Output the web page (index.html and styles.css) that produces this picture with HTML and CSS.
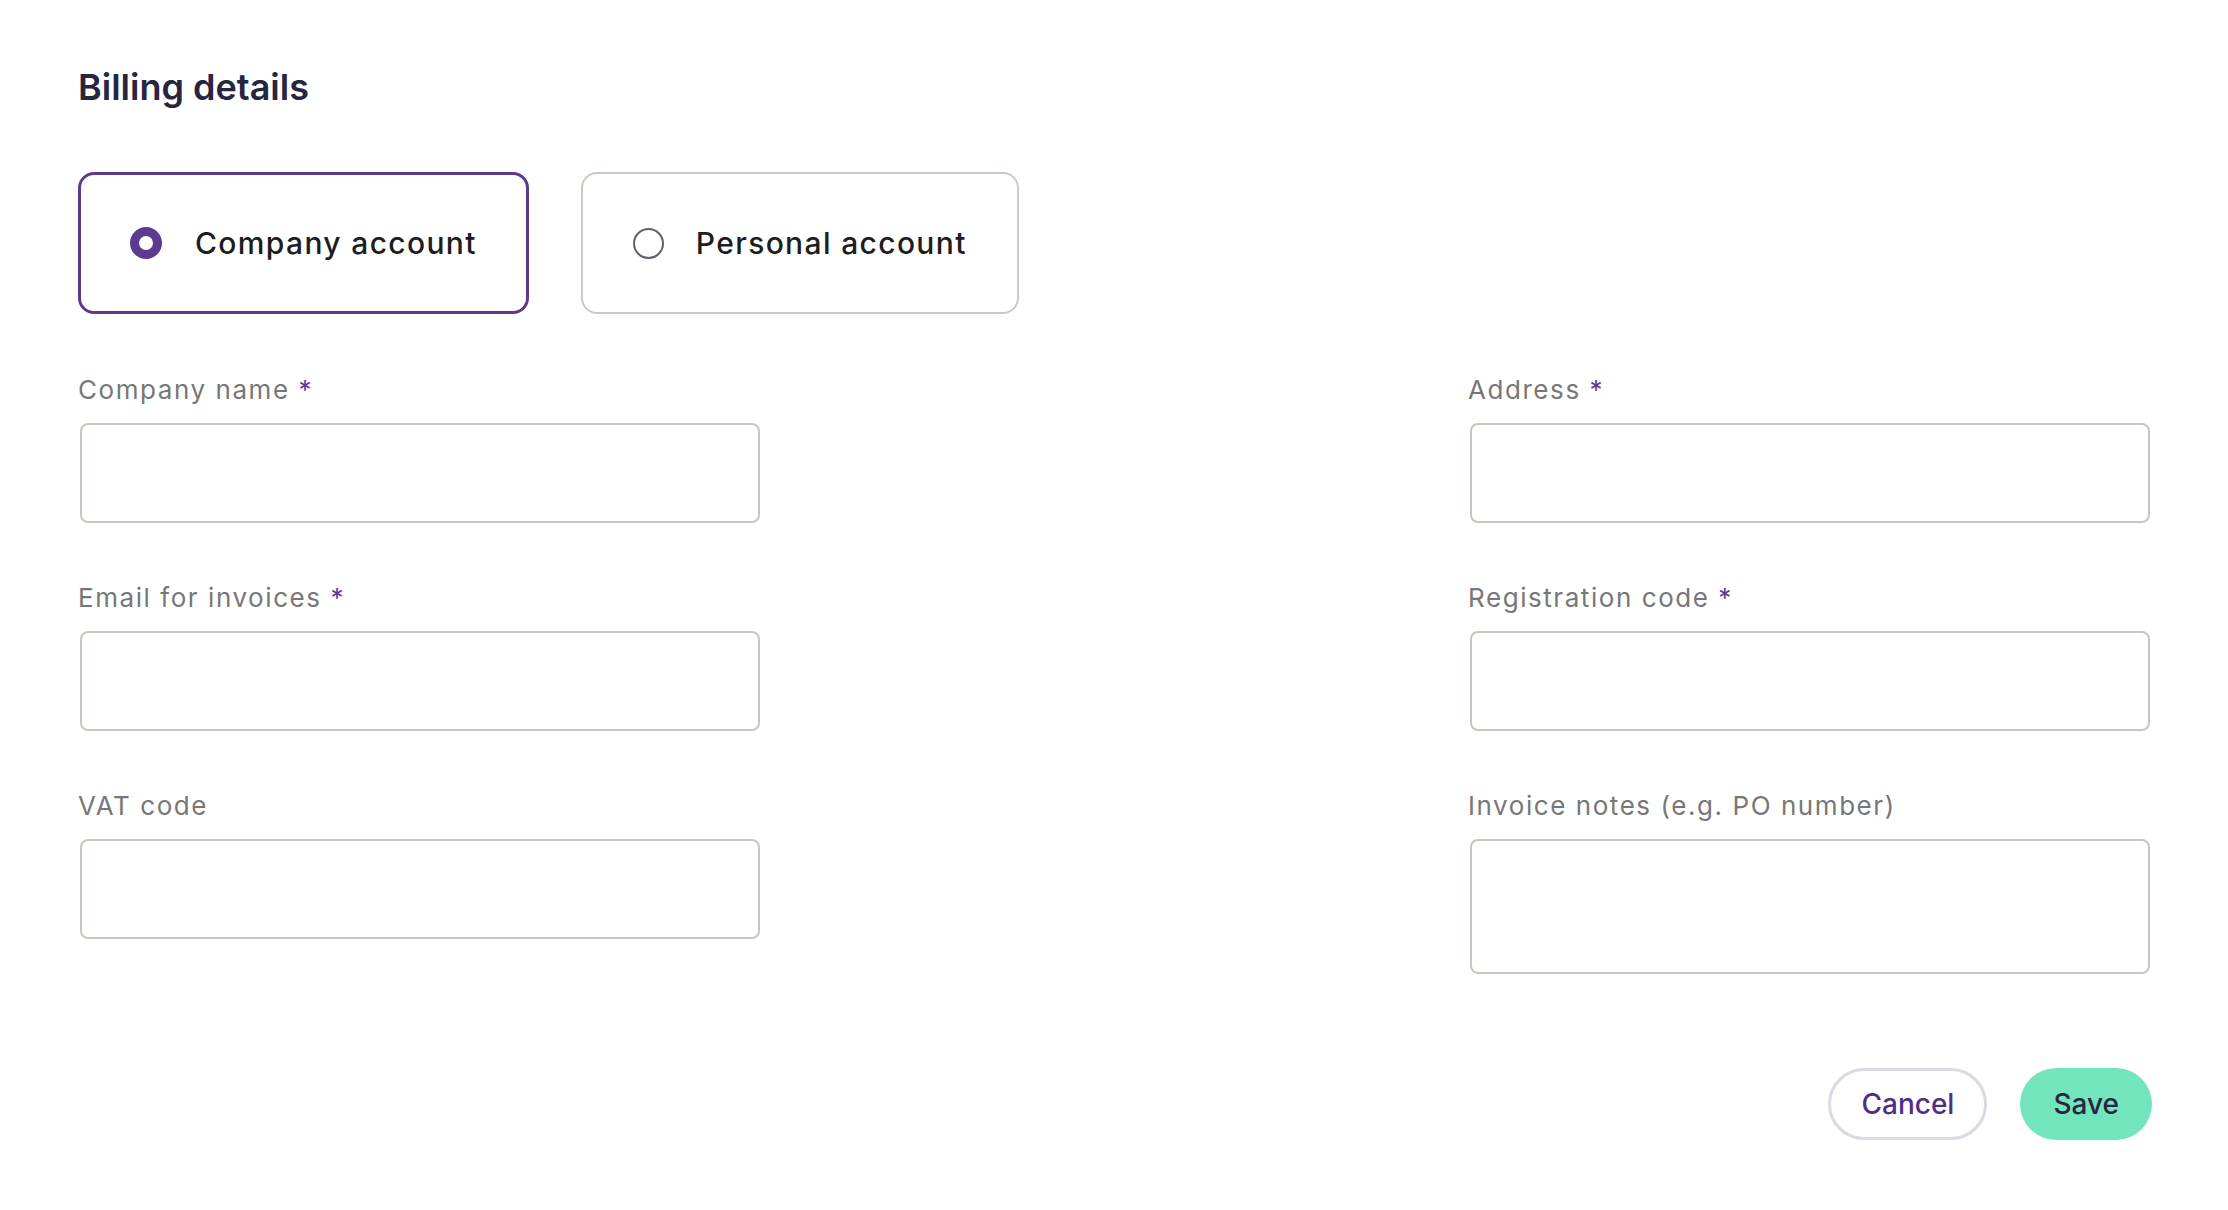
FILE: index.html
```html
<!doctype html>

<html>
    <head>
        <meta charset="utf-8">
        <title>Billing details</title>
        <link rel="stylesheet" href="styles.css">
    </head>
    <body>
        <form class="billing">
            <h1 class="billing-title">Billing details</h1>

            <!-- Account type picker -->
            <div class="account-types">
                <label class="account-option selected">
                    <input type="radio" name="account-type" value="company" checked>
                    <span>Company account</span>
                </label>
                <label class="account-option">
                    <input type="radio" name="account-type" value="personal">
                    <span>Personal account</span>
                </label>
            </div>

            <div class="fields">
                <div class="field-column">
                    <div class="field">
                        <label for="company-name">Company name <em>*</em></label>
                        <input type="text" id="company-name">
                    </div>
                    <div class="field">
                        <label for="invoice-email">Email for invoices <em>*</em></label>
                        <input type="email" id="invoice-email">
                    </div>
                    <div class="field">
                        <label for="vat-code">VAT code</label>
                        <input type="text" id="vat-code">
                    </div>
                </div>
                <div class="field-column">
                    <div class="field">
                        <label for="address">Address <em>*</em></label>
                        <input type="text" id="address">
                    </div>
                    <div class="field">
                        <label for="reg-code">Registration code <em>*</em></label>
                        <input type="text" id="reg-code">
                    </div>
                    <div class="field">
                        <label for="notes">Invoice notes (e.g. PO number)</label>
                        <textarea id="notes"></textarea>
                    </div>
                </div>
            </div>

            <div class="actions">
                <button type="button" class="btn btn-cancel">Cancel</button>
                <button type="submit" class="btn btn-save">Save</button>
            </div>
        </form>
    </body>
</html>
```

FILE: styles.css
```css
body {
    margin: 0;
    background: #fff;
    font-family: Inter, "Noto Sans", sans-serif;
}
.billing {
    padding: 65px 78px 0 78px;
}
.billing-title {
    margin: 0;
    font-size: 36px;
    line-height: 44px;
    font-weight: 600;
    color: #272640;
}

/* account type cards */
.account-types {
    display: flex;
    gap: 52px;
    margin-top: 63px;
}
.account-option {
    display: inline-flex;
    align-items: center;
    gap: 32px;
    height: 142px;
    box-sizing: border-box;
    padding: 0 50px;
    border: 2px solid #cdc8c0;
    border-radius: 16px;
    font-size: 30px;
    font-weight: 500;
    letter-spacing: 0.045em;
    color: #1d1d20;
    cursor: pointer;
}
.account-option.selected {
    border: 3px solid #5b3a8f;
    padding: 0 49px;
    gap: 33px;
}
.account-option input {
    appearance: none;
    margin: 0;
    width: 31px;
    height: 31px;
    box-sizing: border-box;
    border: 2px solid #60606e;
    border-radius: 50%;
    background: #fff;
}
.account-option input:checked {
    width: 32px;
    height: 32px;
    border: 9px solid #5b3a8f;
}

/* form fields */
.fields {
    display: flex;
    justify-content: space-between;
    margin-top: 56px;
}
.field-column {
    width: 682px;
    display: flex;
    flex-direction: column;
    gap: 55px;
}
.field label {
    display: block;
    font-size: 26px;
    line-height: 39px;
    letter-spacing: 0.06em;
    color: #777;
    margin-bottom: 14px;
}
.field em {
    font-style: normal;
    color: #5b3a8f;
}
.field input, .field textarea {
    display: block;
    width: 680px;
    height: 100px;
    margin: 0 0 0 2px;
    box-sizing: border-box;
    border: 2px solid #cbc6bd;
    border-radius: 8px;
    background: #fff;
    font: inherit;
    font-size: 26px;
    padding: 0 20px;
}
.field textarea {
    height: 135px;
    resize: none;
    padding-top: 20px;
}

/* buttons */
.actions {
    display: flex;
    justify-content: flex-end;
    gap: 33px;
    margin: 94px -2px 0 0;
}
.btn {
    height: 72px;
    box-sizing: border-box;
    border-radius: 36px;
    font-family: inherit;
    font-size: 28px;
    font-weight: 500;
    cursor: pointer;
}
.btn-cancel {
    padding: 0 30px;
    border: 3px solid #dcd8e6;
    background: #fff;
    color: #4d2f88;
}
.btn-save {
    padding: 0 33px;
    border: none;
    background: #72e5bc;
    color: #272640;
}
```
